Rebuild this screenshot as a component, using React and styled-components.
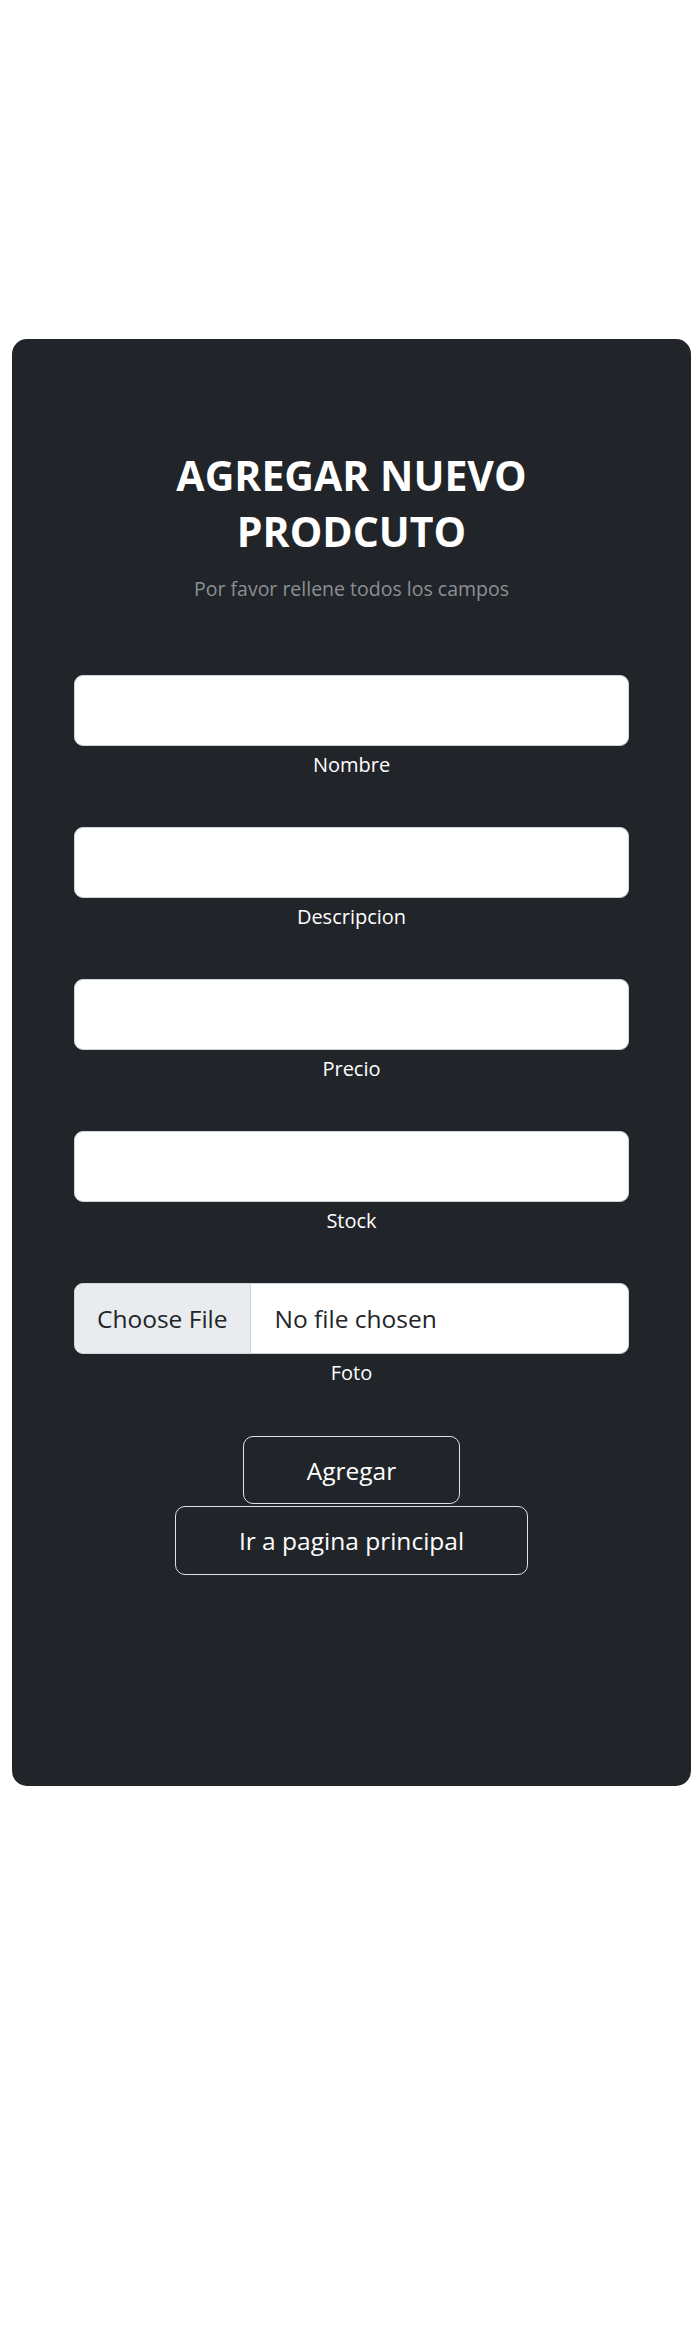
import React, { useState } from 'react'
import styled, { createGlobalStyle } from 'styled-components'

const GlobalStyle = createGlobalStyle`
  * {
    box-sizing: border-box;
  }
  body {
    margin: 0;
    background: #ffffff;
    font-family: 'Open Sans', 'Noto Sans', sans-serif;
  }
`

const Page = styled.div`
  padding: 339px 0 0 12px;
  min-height: 2333px;
`

const Card = styled.div`
  width: 679px;
  height: 1447px;
  padding-top: 108px;
  background: #212529;
  border-radius: 15px;
  text-align: center;
`

const Title = styled.h2`
  max-width: 390px;
  margin: 0 auto;
  font-size: 41px;
  font-weight: 700;
  line-height: 56px;
  color: #ffffff;
`

const Subtitle = styled.p`
  margin: 15px 0 0;
  font-size: 19.5px;
  line-height: 29px;
  color: #8a9096;
`

const Form = styled.form`
  width: 555px;
  margin: 72px auto 0;
  display: flex;
  flex-direction: column;
  gap: 47px;
`

const Field = styled.div`
  display: flex;
  flex-direction: column;
`

const TextInput = styled.input`
  height: 71px;
  width: 100%;
  padding: 0 22px;
  border: 1px solid #ced4da;
  border-radius: 9px;
  background: #ffffff;
  font-family: inherit;
  font-size: 25px;
  color: #212529;
  outline: none;
`

const FileBox = styled.label`
  height: 71px;
  display: flex;
  align-items: stretch;
  border: 1px solid #ced4da;
  border-radius: 9px;
  background: #ffffff;
  overflow: hidden;
  cursor: pointer;

  input {
    display: none;
  }
`

const ChooseButton = styled.span`
  display: flex;
  align-items: center;
  padding: 0 22px;
  background: #e9ecef;
  border-right: 1px solid #ced4da;
  font-size: 24.5px;
  color: #212529;
`

const FileName = styled.span`
  display: flex;
  align-items: center;
  padding-left: 24px;
  font-size: 24.5px;
  color: #212529;
`

const Label = styled.label`
  margin-top: 4px;
  font-size: 20px;
  line-height: 30px;
  color: #ffffff;
`

const Actions = styled.div`
  margin-top: 48px;
  display: flex;
  flex-direction: column;
  align-items: center;
  gap: 2px;
`

const OutlineButton = styled.button`
  height: ${(p) => p.$h || 68}px;
  padding: 0 63px;
  border: 1.5px solid #dee2e6;
  border-radius: 10px;
  background: transparent;
  font-family: inherit;
  font-size: 24.5px;
  color: #ffffff;
  cursor: pointer;
`

const fields = [
  { id: 'nombre', label: 'Nombre' },
  { id: 'descripcion', label: 'Descripcion' },
  { id: 'precio', label: 'Precio' },
  { id: 'stock', label: 'Stock' },
]

const App = () => {
  const [values, setValues] = useState({})
  const [fileName, setFileName] = useState('')

  const onChange = (id) => (e) => setValues({ ...values, [id]: e.target.value })

  return (
    <Page>
      <GlobalStyle />
      <Card>
        <Title>AGREGAR NUEVO PRODCUTO</Title>
        <Subtitle>Por favor rellene todos los campos</Subtitle>
        <Form onSubmit={(e) => e.preventDefault()}>
          {fields.map((f) => (
            <Field key={f.id}>
              <TextInput id={f.id} value={values[f.id] || ''} onChange={onChange(f.id)} />
              <Label htmlFor={f.id}>{f.label}</Label>
            </Field>
          ))}
          <Field>
            <FileBox>
              <input
                type="file"
                id="foto"
                onChange={(e) => setFileName(e.target.files[0] ? e.target.files[0].name : '')}
              />
              <ChooseButton>Choose File</ChooseButton>
              <FileName>{fileName || 'No file chosen'}</FileName>
            </FileBox>
            <Label htmlFor="foto">Foto</Label>
          </Field>
        </Form>
        <Actions>
          <OutlineButton type="submit">Agregar</OutlineButton>
          <OutlineButton type="button" $h={69}>
            Ir a pagina principal
          </OutlineButton>
        </Actions>
      </Card>
    </Page>
  )
}

export default App
